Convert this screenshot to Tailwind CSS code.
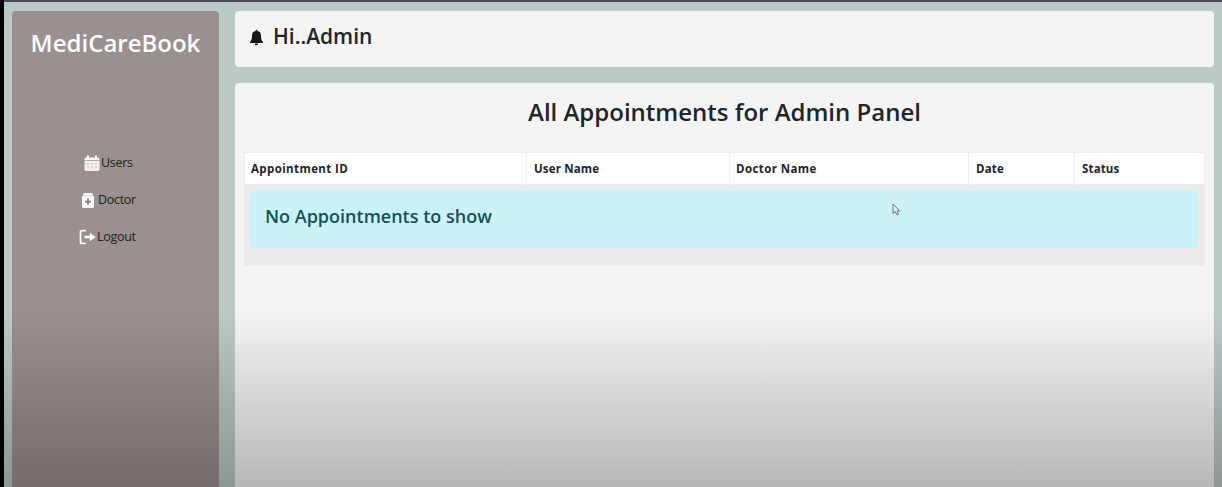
<!DOCTYPE html>
<html lang="en">
<head>
<meta charset="utf-8">
<title>MediCareBook</title>
<script src="https://cdn.jsdelivr.net/npm/@tailwindcss/browser@4"></script>
</head>
<body class="relative h-[487px] w-[1222px] overflow-hidden border-l-4 border-black bg-[#bbc9c7] font-['Open_Sans','Noto_Sans',sans-serif] text-[#212529]">
<div class="h-[2px] bg-[#4b4b5b]"></div>
<div class="flex h-[485px] gap-4 pt-[9px] pr-[8px] pl-2">
  <aside class="flex w-[207px] shrink-0 flex-col items-center rounded-t bg-[#9a908f]">
    <h1 class="mt-4 text-[24px] leading-8 font-semibold whitespace-nowrap text-white">MediCareBook</h1>
    <nav class="mt-[85px] flex w-full flex-col text-[12.500px] tracking-[-0.3px] text-[#222]">
      <a class="flex h-[37px] items-center pl-[72px]">
        <svg class="mr-px h-4 w-4 shrink-0" viewBox="0 0 16 16" fill="#fff"><path d="M3 0.500h2v2h6v-2h2v2h1q1.500 0 1.500 1.500v1.300H.5V4Q.5 2.500 2 2.500h1z"/><path d="M.5 6h15v8.500Q15.500 16 14 16H2Q.5 16 .5 14.500z" fill="#f3eeee"/><path d="M3 8h2v1.500H3zm4 0h2v1.500H7zm4 0h2v1.500h-2zm-8 3.200h2v1.500H3zm4 0h2v1.500H7zm4 0h2v1.500h-2z" fill="#d6cfcf"/></svg><span class="pt-[2px]">Users</span></a>
      <a class="flex h-[37px] items-center pl-[70px]">
        <svg class="mr-1 h-4 w-3 shrink-0" viewBox="0 0 12 16" fill="#fff"><path d="M1.500 1h9v2.500h-9z"/><path d="M1.500 3.500h9Q12 3.500 12 5v9.500q0 1.500-1.500 1.500h-9Q0 16 0 14.500V5q0-1.500 1.500-1.500z"/><path d="M1.500 3.200h9v.6h-9z" fill="#c9c2c1"/><path d="M5.100 6.700h1.800v2h2v1.800h-2v2H5.100v-2h-2V8.700h2z" fill="#817777"/></svg><span class="pt-[2px]">Doctor</span></a>
      <a class="flex h-[37px] items-center pl-[67px]">
        <svg class="mr-px h-4 w-[17px] shrink-0" viewBox="0 0 17 16" fill="none" stroke="#fff" stroke-width="1.700"><path d="M7 1.600H2.500q-1 0-1 1v10.800q0 1 1 1H7"/><path d="M5.500 8H12" stroke-width="2.600"/><path d="M10.800 3.800L16.700 8l-5.900 4.200z" fill="#fff" stroke="none"/></svg><span class="pt-[2px]">Logout</span></a>
    </nav>
  </aside>
  <div class="flex min-w-0 flex-1 flex-col gap-4">
    <header class="flex h-14 shrink-0 items-start rounded bg-[#f4f4f4] pl-[15px]">
      <svg class="mt-[18px] h-[17px] w-[13px]" viewBox="0 0 13 17" fill="#151719"><path d="M5.700 1.500a.8.800 0 0 1 1.600 0v.6C9.900 2.500 11 4.400 11 6.800c0 3.300.5 4.700 2 6.200v1H0v-1c1.500-1.500 2-2.900 2-6.200 0-2.400 1.100-4.300 3.700-4.700z"/><path d="M4.700 14.500h3.600q0 1.700-1.800 1.700t-1.800-1.700z"/></svg>
      <h3 class="mt-[9px] ml-[10px] text-[21px] leading-8 font-semibold">Hi..Admin</h3>
    </header>
    <main class="flex-1 rounded-t bg-[#f4f4f4] pr-[9px] pl-[9px]">
      <h2 class="pt-[11px] text-center text-[24px] leading-9 font-semibold whitespace-nowrap">All Appointments for Admin Panel</h2>
      <div class="mt-[22px] h-[114px] border border-[#eee] bg-[#eaeaea]">
        <div class="grid h-[31px] grid-cols-[281px_203px_239px_106px_1fr] bg-white text-[11.500px] leading-[32px] font-bold tracking-[0.15px]">
          <div class="pl-[6px] tracking-[0.4px]">Appointment ID</div>
          <div class="border-l border-[#f0f0f0] pl-[7px]">User Name</div>
          <div class="border-l border-[#f0f0f0] pl-[6px] tracking-[0.4px]">Doctor Name</div>
          <div class="border-l border-[#f0f0f0] pl-[7px]">Date</div>
          <div class="border-l border-[#f0f0f0] pl-[7px]">Status</div>
        </div>
        <div class="mr-[6px] ml-[5px] mt-[7px] h-[57px] rounded-sm border border-[#c6f0f7] bg-[#cbf2f9] pl-[14px]">
          <h4 class="pt-[9px] text-[18px] leading-[30px] font-semibold text-[#145058]">No Appointments to show</h4>
        </div>
      </div>
    </main>
  </div>
</div>
<div class="pointer-events-none absolute inset-x-0 bottom-0 h-[177px] bg-linear-to-b from-black/0 to-black/25"></div>
<svg class="absolute top-[203px] left-[888px] h-[13px] w-[9px]" viewBox="0 0 9 13"><path d="M1 1v9.500l2.200-2L5 12l1.500-.8L5 8h3z" fill="#dfeff3" stroke="#6b7a82" stroke-width="1"/></svg>
</body>
</html>
